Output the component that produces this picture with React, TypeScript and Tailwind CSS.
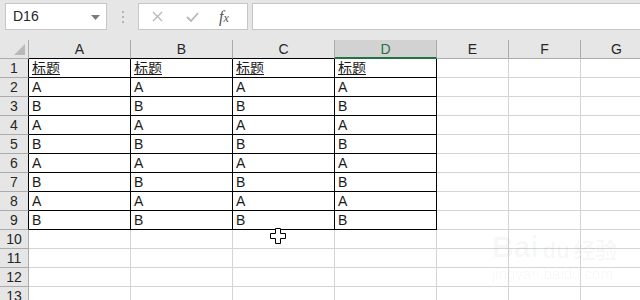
import React from 'react'

const cols = [
  { key: 'A', w: 'w-[102px]' },
  { key: 'B', w: 'w-[102px]' },
  { key: 'C', w: 'w-[102px]' },
  { key: 'D', w: 'w-[102px]' },
  { key: 'E', w: 'w-[72px]' },
  { key: 'F', w: 'w-[72px]' },
  { key: 'G', w: 'w-[72px]' },
]

const rows = Array.from({ length: 13 }, (_, i) => i + 1)

function cellText(r: number, c: number) {
  if (c > 3 || r > 9) return ''
  if (r === 1) return '标题'
  return r % 2 === 0 ? 'A' : 'B'
}

function Toolbar() {
  return (
    <div className="flex h-[40px] items-start bg-[#e6e6e6] pl-[5px] pt-[3px]">
      <div className="relative flex h-[27px] w-[102px] items-center border border-[#c6c6c6] bg-white pl-[7px] text-[14px] text-[#262626]">
        D16
        <svg className="absolute right-[6px] top-[11px]" width="9" height="5" viewBox="0 0 9 5">
          <path d="M0 0h9L4.5 5z" fill="#7a7a7a" />
        </svg>
      </div>
      <div className="flex h-[27px] w-[31px] flex-col items-center justify-center gap-[3px]">
        <span className="h-[2px] w-[2px] bg-[#b4b4b4]" />
        <span className="h-[2px] w-[2px] bg-[#b4b4b4]" />
        <span className="h-[2px] w-[2px] bg-[#b4b4b4]" />
      </div>
      <div className="flex h-[27px] w-[110px] items-center border border-[#c6c6c6] bg-white">
        <svg className="ml-[13px]" width="11" height="11" viewBox="0 0 11 11">
          <path d="M1 1l9 9M10 1l-9 9" stroke="#b8b8b8" strokeWidth="1.4" />
        </svg>
        <svg className="ml-[23px]" width="13" height="10" viewBox="0 0 13 10">
          <path d="M1 5l4 4 7-8" stroke="#b8b8b8" strokeWidth="1.8" fill="none" />
        </svg>
        <span className="ml-[20px] font-['Liberation_Serif',serif] text-[16px] italic text-[#555]">
          f<span className="text-[12px]">x</span>
        </span>
      </div>
      <div className="ml-[4px] h-[27px] flex-1 border border-r-0 border-[#c6c6c6] bg-white" />
    </div>
  )
}

export default function App() {
  return (
    <div className="relative h-[300px] w-[640px] overflow-hidden bg-white font-['Liberation_Sans','Noto_Sans_CJK_SC',sans-serif]">
      <Toolbar />
      {/* column headers */}
      <div className="flex h-[19px] bg-[#e6e6e6]">
        <div className="relative w-[29px] shrink-0 border-r border-b border-[#ababab]">
          <svg className="absolute bottom-[3px] right-[3px]" width="11" height="11" viewBox="0 0 11 11">
            <path d="M11 0v11H0z" fill="#b9b9b9" />
          </svg>
        </div>
        {cols.map((c, i) => (
          <div
            key={c.key}
            className={`${c.w} flex shrink-0 items-center justify-center border-r border-[#ababab] text-[14px] leading-none ${
              c.key === 'D'
                ? 'border-b-2 border-b-[#217346] bg-[#d2d2d2] text-[#217346]'
                : i < 4
                  ? 'border-b border-b-black text-[#262626]'
                  : 'border-b border-b-[#ababab] text-[#262626]'
            }`}
          >
            {c.key}
          </div>
        ))}
        <div className="flex-1 border-b border-[#ababab]" />
      </div>
      {/* rows */}
      {rows.map((r) => (
        <div key={r} className="flex h-[19px]">
          <div
            className={`flex w-[29px] shrink-0 items-center justify-center border-b border-r bg-[#e6e6e6] text-[14px] leading-none text-[#262626] ${
              r <= 9 ? 'border-b-[#ababab] border-r-black' : 'border-[#ababab]'
            }`}
          >
            {r}
          </div>
          {cols.map((c, ci) => {
            const inTable = r <= 9 && ci <= 3
            return (
              <div
                key={c.key}
                className={`${c.w} flex shrink-0 items-center border-r border-b pl-[3px] text-[14px] leading-none text-[#1a1a1a] ${
                  inTable ? 'border-black' : 'border-[#d4d4d4]'
                } ${r === 1 && ci <= 3 ? 'underline underline-offset-1' : ''}`}
              >
                {cellText(r, ci)}
              </div>
            )
          })}
          <div className="flex-1 border-b border-[#d4d4d4]" />
        </div>
      ))}
      {/* cursor */}
      <svg className="absolute left-[270px] top-[228px]" width="16" height="16" viewBox="0 0 16 16">
        <path
          d="M5.5 0.5h5v5h5v5h-5v5h-5v-5h-5v-5h5z"
          fill="white"
          stroke="black"
          strokeWidth="1"
        />
      </svg>
      {/* watermark */}
      <div className="pointer-events-none absolute left-[492px] top-[232px] flex flex-col items-start text-[#000]/[0.04]">
        <div className="flex items-end gap-[4px] text-[30px] font-bold leading-none">
          <span>Bai</span>
          <span className="text-[22px]">du</span>
          <span className="text-[22px]">经验</span>
        </div>
        <div className="mt-[4px] text-[15px] leading-none">jingyan.baidu.com</div>
      </div>
    </div>
  )
}
